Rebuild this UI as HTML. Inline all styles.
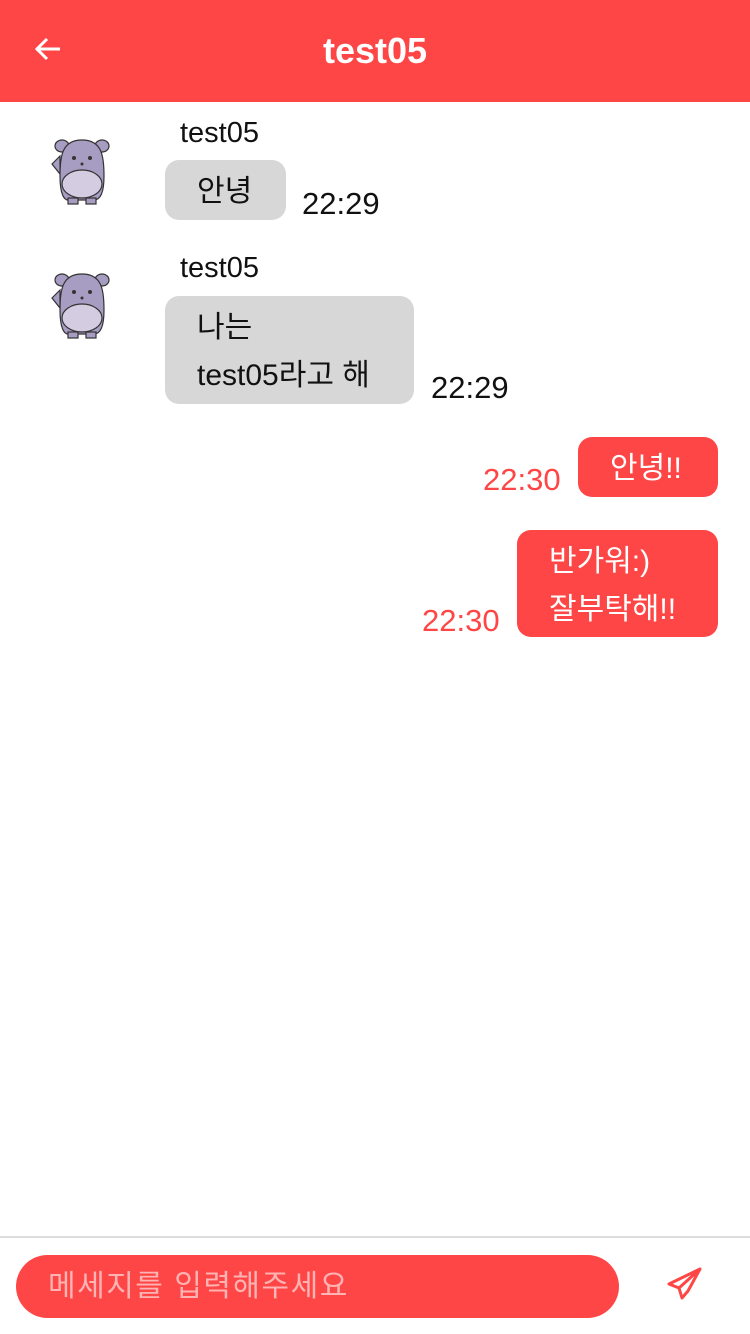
<!DOCTYPE html>
<html><head><meta charset="utf-8"><style>
*{margin:0;padding:0;box-sizing:border-box}
body{width:750px;height:1334px;position:relative;background:#fff;font-family:"Liberation Sans","Noto Sans CJK KR",sans-serif;overflow:hidden}
.hdr{position:absolute;left:0;top:0;width:750px;height:102px;background:#ff4646;color:#fff;text-align:center;font-size:36px;font-weight:bold;line-height:102px}
.a{position:absolute}
.name{font-size:29px;color:#111}
.b{position:absolute;background:#d7d7d7;border-radius:14px;font-size:30px;color:#111;line-height:48px;padding:8px 32px 0;white-space:nowrap}
.r{background:#ff4646;color:#fff}
.t{position:absolute;font-size:31px;color:#111}
.tr{color:#ff4646}
</style></head><body>
<div class="hdr">test05</div>
<svg class="a" style="left:34px;top:36px" width="28" height="26" viewBox="0 0 28 26"><path d="M26 13H3M13 3L3 13l10 10" stroke="#fff" stroke-width="3" fill="none"/></svg>

<svg class="a" style="left:48px;top:136px" width="66" height="70" viewBox="0 0 66 70">
<g stroke="#333" stroke-width="1.2">
<ellipse cx="14" cy="10" rx="7" ry="6" fill="#a79cc2"/><ellipse cx="54" cy="10" rx="7" ry="6" fill="#a79cc2"/>
<path d="M12 20 L4 28 L12 38Z" fill="#a79cc2"/>
<path d="M34 4 C14 4 12 20 12 40 C12 58 16 64 20 64 L46 64 C52 64 56 58 56 40 C56 20 54 4 34 4Z" fill="#a79cc2"/>
<ellipse cx="34" cy="48" rx="20" ry="14" fill="#d4cde2"/>
<rect x="20" y="62" width="10" height="6" fill="#a79cc2"/><rect x="38" y="62" width="10" height="6" fill="#a79cc2"/>
</g>
<circle cx="26" cy="22" r="2" fill="#333"/><circle cx="42" cy="22" r="2" fill="#333"/><circle cx="34" cy="28" r="1.5" fill="#333"/>
</svg>
<svg class="a" style="left:48px;top:270px" width="66" height="70" viewBox="0 0 66 70">
<g stroke="#333" stroke-width="1.2">
<ellipse cx="14" cy="10" rx="7" ry="6" fill="#a79cc2"/><ellipse cx="54" cy="10" rx="7" ry="6" fill="#a79cc2"/>
<path d="M12 20 L4 28 L12 38Z" fill="#a79cc2"/>
<path d="M34 4 C14 4 12 20 12 40 C12 58 16 64 20 64 L46 64 C52 64 56 58 56 40 C56 20 54 4 34 4Z" fill="#a79cc2"/>
<ellipse cx="34" cy="48" rx="20" ry="14" fill="#d4cde2"/>
<rect x="20" y="62" width="10" height="6" fill="#a79cc2"/><rect x="38" y="62" width="10" height="6" fill="#a79cc2"/>
</g>
<circle cx="26" cy="22" r="2" fill="#333"/><circle cx="42" cy="22" r="2" fill="#333"/><circle cx="34" cy="28" r="1.5" fill="#333"/>
</svg>

<div class="a name" style="left:180px;top:117px">test05</div>
<div class="b" style="left:165px;top:160px;width:121px;height:60px">안녕</div>
<div class="t" style="left:302px;top:186px">22:29</div>

<div class="a name" style="left:180px;top:252px">test05</div>
<div class="b" style="left:165px;top:296px;width:249px;height:108px">나는<br>test05라고 해</div>
<div class="t" style="left:431px;top:370px">22:29</div>

<div class="b r" style="left:578px;top:437px;width:140px;height:60px">안녕!!</div>
<div class="t tr" style="left:483px;top:462px">22:30</div>

<div class="b r" style="left:517px;top:530px;width:201px;height:107px">반가워:)<br>잘부탁해!!</div>
<div class="t tr" style="left:422px;top:603px">22:30</div>

<div class="a" style="left:0;top:1236px;width:750px;height:2px;background:#ddd"></div>
<div class="a" style="left:16px;top:1255px;width:603px;height:63px;border-radius:32px;background:#ff4646;color:#ffb3b3;font-size:30px;letter-spacing:1.5px;line-height:63px;padding-left:32px">메세지를 입력해주세요</div>
<svg class="a" style="left:666px;top:1266px" width="38" height="36" viewBox="0 0 38 36"><path d="M34 3 L3 18 L13 22 L16 32 L22 25 L34 3Z M13 22 L34 3" stroke="#ff4646" stroke-width="3" fill="none" stroke-linejoin="round"/></svg>
</body></html>
